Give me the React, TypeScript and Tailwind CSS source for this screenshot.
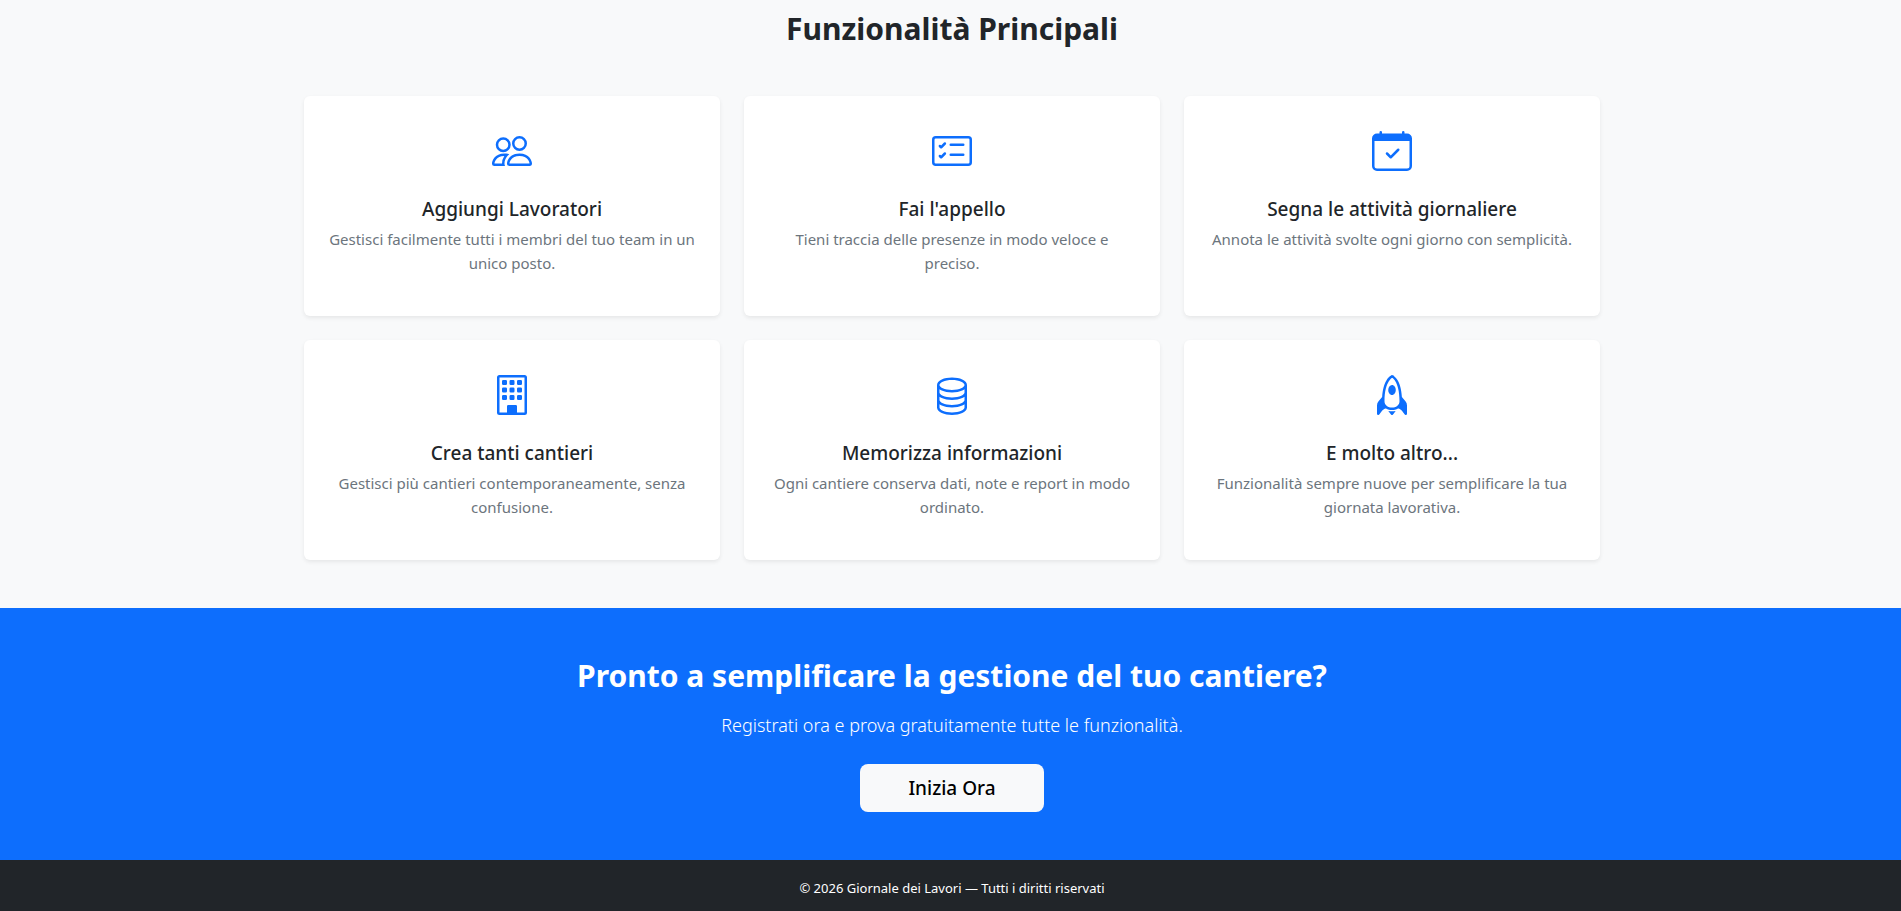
import type { IconType } from "react-icons";
import {
  BsBuilding,
  BsCalendarCheck,
  BsCardChecklist,
  BsDatabase,
  BsPeople,
  BsRocket,
} from "react-icons/bs";

type Feature = { icon: IconType; title: string; text: string };

const features: Feature[] = [
  {
    icon: BsPeople,
    title: "Aggiungi Lavoratori",
    text: "Gestisci facilmente tutti i membri del tuo team in un unico posto.",
  },
  {
    icon: BsCardChecklist,
    title: "Fai l'appello",
    text: "Tieni traccia delle presenze in modo veloce e preciso.",
  },
  {
    icon: BsCalendarCheck,
    title: "Segna le attività giornaliere",
    text: "Annota le attività svolte ogni giorno con semplicità.",
  },
  {
    icon: BsBuilding,
    title: "Crea tanti cantieri",
    text: "Gestisci più cantieri contemporaneamente, senza confusione.",
  },
  {
    icon: BsDatabase,
    title: "Memorizza informazioni",
    text: "Ogni cantiere conserva dati, note e report in modo ordinato.",
  },
  {
    icon: BsRocket,
    title: "E molto altro...",
    text: "Funzionalità sempre nuove per semplificare la tua giornata lavorativa.",
  },
];

function FeatureCard({ icon: Icon, title, text }: Feature) {
  return (
    <article className="rounded-md bg-white px-6 pt-[35px] pb-[41px] text-center shadow-[0_2px_4px_rgba(0,0,0,0.075)]">
      <Icon className="mx-auto size-10 text-[#0d6efd]" aria-hidden="true" />
      <h3 className="mt-[26px] text-[19px] leading-6 font-medium">{title}</h3>
      <p className="mt-1.5 text-[15px] leading-6 text-[#6c757d]">{text}</p>
    </article>
  );
}

export default function App() {
  return (
    <div className="font-['Noto_Sans','Open_Sans',sans-serif] text-[#212529]">
      <section className="bg-[#f8f9fa] pt-2.5 pr-3 pb-12 pl-[15px]">
        <div className="mx-auto max-w-[1296px]">
          <h2 className="mb-12 text-center text-[30px] leading-[38px] font-bold">
            Funzionalità Principali
          </h2>
          <div className="grid grid-cols-1 gap-6 md:grid-cols-3">
            {features.map((feature) => (
              <FeatureCard key={feature.title} {...feature} />
            ))}
          </div>
        </div>
      </section>

      <section className="bg-[#0d6efd] pt-[49px] pr-3 pb-12 pl-[15px] text-center text-white">
        <h2 className="text-[30px] leading-[38px] font-bold">
          Pronto a semplificare la gestione del tuo cantiere?
        </h2>
        <p className="mt-[15px] mb-6 text-lg leading-[30px] font-light">
          Registrati ora e prova gratuitamente tutte le funzionalità.
        </p>
        <a
          href="#registrati"
          className="mx-auto flex h-12 w-fit items-center rounded-lg bg-[#f8f9fa] px-12 text-[19px] font-medium text-black"
        >
          Inizia Ora
        </a>
      </section>

      <footer className="bg-[#212529] pt-[18px] pr-3 pb-3 pl-[15px] text-center text-[13px] leading-[21px] text-white">
        © 2026 Giornale dei Lavori — Tutti i diritti riservati
      </footer>
    </div>
  );
}
